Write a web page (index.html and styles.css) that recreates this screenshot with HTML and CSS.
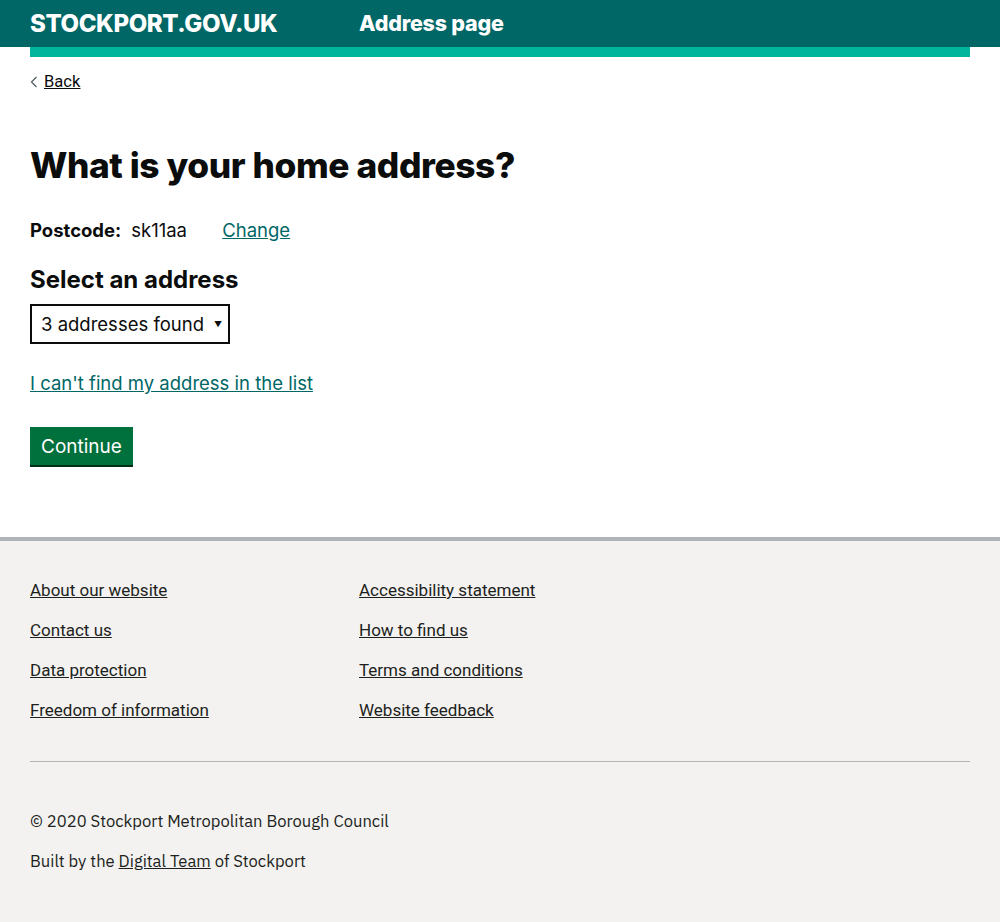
FILE: index.html
```html
<!DOCTYPE html>
<html lang="en">
<head>
<meta charset="utf-8">
<title>Address page</title>
<link rel="stylesheet" href="styles.css">
</head>
<body>
<header class="site-header">
  <div class="header-inner">
    <span class="logo">STOCKPORT.GOV.UK</span>
    <span class="service">Address page</span>
  </div>
</header>
<div class="header-band"></div>
<main class="main">
  <a class="back-link" href="#"><svg class="chev" width="8" height="12" viewBox="0 0 8 12"><path d="M6.5 1 L1.5 6 L6.5 11" fill="none" stroke="#505a5f" stroke-width="1.2"/></svg><span>Back</span></a>
  <h1 class="heading">What is your home address?</h1>
  <p class="postcode"><strong>Postcode:</strong><span class="pc-value">sk11aa</span><a class="link" href="#">Change</a></p>
  <label class="label" for="addr">Select an address</label>
  <div class="select-box" id="addr"><span>3 addresses found</span><span class="arrow">▼</span></div>
  <p class="manual"><a class="link" href="#">I can't find my address in the list</a></p>
  <button class="button" type="button">Continue</button>
</main>
<footer class="footer">
  <div class="footer-inner">
    <ul class="footer-links">
      <li><a href="#">About our website</a></li>
      <li><a href="#">Accessibility statement</a></li>
      <li><a href="#">Contact us</a></li>
      <li><a href="#">How to find us</a></li>
      <li><a href="#">Data protection</a></li>
      <li><a href="#">Terms and conditions</a></li>
      <li><a href="#">Freedom of information</a></li>
      <li><a href="#">Website feedback</a></li>
    </ul>
    <hr class="footer-rule">
    <p class="meta">© 2020 Stockport Metropolitan Borough Council</p>
    <p class="meta">Built by the <a href="#">Digital Team</a> of Stockport</p>
  </div>
</footer>
</body>
</html>
```
FILE: styles.css
```css
html, body { margin: 0; padding: 0; background: #f3f2f1; }
body { font-family: Inter, "Liberation Sans", sans-serif; color: #0b0c0c; }

.site-header { background: #006766; height: 47px; }
.header-inner { display: flex; align-items: center; height: 47px; padding-left: 30px; color: #fff; font-weight: 800; }
.logo { font-family: Inter, sans-serif; font-size: 24px; letter-spacing: -0.4px; width: 329px; line-height: 1; }
.service { font-family: Inter, sans-serif; font-size: 21.5px; letter-spacing: -0.2px; line-height: 1; }

.header-band { background: #fff; padding: 0 30px; height: 10px; }
.header-band::before { content: ""; display: block; height: 10px; background: #00b59b; }

.main { background: #fff; padding: 14px 30px 72px; }

.back-link { display: inline-flex; align-items: center; gap: 6px; color: #0b0c0c; font-family: Roboto, sans-serif; font-size: 16.5px; line-height: 22px; }
.back-link span { text-decoration: underline; }
.chev { display: block; }

.heading { font-family: Inter, sans-serif; font-size: 35.3px; font-weight: 800; letter-spacing: -0.4px; margin: 48px 0 0; line-height: 50px; }

.postcode { font-family: Inter, sans-serif; font-size: 18.5px; margin: 26px 0 0; line-height: 26px; display: flex; align-items: baseline; }
.postcode strong { font-weight: 700; }
.pc-value { margin-left: 10px; width: 91px; }
.link { color: #006766; text-decoration: underline; }

.label { display: block; font-family: Inter, sans-serif; font-size: 24px; font-weight: 700; margin-top: 22px; line-height: 30px; }

.select-box { box-sizing: border-box; width: 200px; height: 40px; border: 2px solid #0b0c0c; margin-top: 9px; display: flex; align-items: center; justify-content: space-between; padding: 0 6px 0 9px; font-family: Inter, sans-serif; font-size: 18.5px; }
.arrow { font-size: 8px; }

.manual { font-family: Inter, sans-serif; font-size: 18.5px; line-height: 26px; margin: 26px 0 0; }

.button { margin-top: 31px; display: block; background: #00703c; color: #fff; border: 0; box-shadow: 0 2px 0 #002d18; height: 38px; padding: 0 11px; font-family: Inter, sans-serif; font-size: 19px; cursor: pointer; }

.footer { border-top: 4px solid #b1b4b6; background: #f3f2f1; }
.footer-inner { padding: 38px 30px 40px; }
.footer-links { list-style: none; margin: 0; padding: 0; display: grid; grid-template-columns: 329px 1fr; row-gap: 18px; }
.footer-links li { font-family: Roboto, sans-serif; font-size: 17px; line-height: 22px; }
.footer-links a { color: #1d1f20; }
.footer-rule { border: 0; border-top: 1px solid #b1b4b6; margin: 40px 0 48px; }
.meta { font-family: "IBM Plex Sans", "Noto Sans", sans-serif; font-size: 16.6px; line-height: 22px; margin: 0 0 18px; color: #1d1f20; }
.meta a { color: #1d1f20; }
```
